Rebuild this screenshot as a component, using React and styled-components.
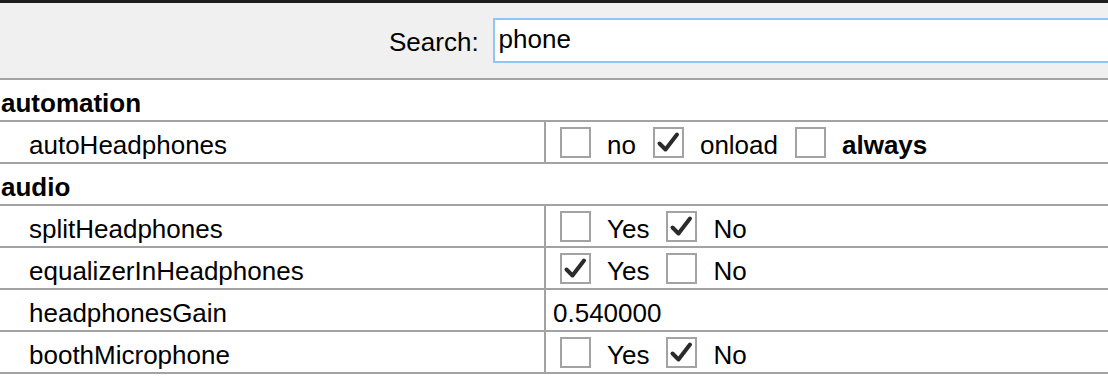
import React from "react";
import styled, { createGlobalStyle } from "styled-components";

const GlobalStyle = createGlobalStyle`
  html, body {
    margin: 0;
    padding: 0;
    background: #ffffff;
    overflow: hidden;
  }
  body {
    font-family: "Liberation Sans", Arial, sans-serif;
    font-size: 26px;
    color: #000000;
  }
`;

const Page = styled.div`
  width: 1108px;
  height: 386px;
  overflow: hidden;
  border-top: 3px solid #1e1e1e;
  box-sizing: border-box;
`;

const SearchBar = styled.div`
  display: flex;
  align-items: center;
  gap: 14px;
  height: 75px;
  padding-left: 389px;
  background: #f0f0f0;
  border-bottom: 2px solid #a3a3a3;
  overflow: hidden;
`;

const SearchLabel = styled.label`
  font-size: 26px;
  flex: none;
  margin-top: 4px;
`;

const SearchInput = styled.input`
  flex: none;
  width: 660px;
  height: 45px;
  box-sizing: border-box;
  border: 2px solid #91c6f4;
  outline: none;
  padding: 0 4px 2px;
  font-family: "Liberation Sans", Arial, sans-serif;
  font-size: 26px;
  color: #000000;
  background: #ffffff;
`;

const Table = styled.div`
  display: flex;
  flex-direction: column;
`;

const GroupHeader = styled.div`
  height: 40px;
  box-sizing: border-box;
  display: flex;
  align-items: center;
  padding: 6px 0 0 1px;
  font-weight: bold;
  border-bottom: 2px solid #a3a3a3;
  height: 42px;
`;

const Row = styled.div`
  height: 42px;
  box-sizing: border-box;
  display: grid;
  grid-template-columns: 546px 1fr;
  border-bottom: 2px solid #a3a3a3;
`;

const KeyCell = styled.div`
  display: flex;
  align-items: center;
  padding: 6px 0 0 29px;
  border-right: 2px solid #a3a3a3;
`;

const ValueCell = styled.div`
  display: flex;
  align-items: center;
  padding-left: ${(p) => (p.$text ? "7px" : "14px")};
  padding-top: ${(p) => (p.$text ? "6px" : "0")};
`;

const Option = styled.span`
  display: inline-flex;
  align-items: center;
  margin-right: 17px;
`;

const Box = styled.span`
  width: 31px;
  height: 31px;
  box-sizing: border-box;
  border: 2px solid #a3a3a3;
  background: #ffffff;
  display: inline-flex;
  align-items: center;
  justify-content: center;
  margin-right: 16px;
  flex: none;
`;

const OptionText = styled.span`
  font-weight: ${(p) => (p.$bold ? "bold" : "normal")};
  margin-top: 6px;
`;

const Check = () => (
  <svg width="25" height="25" viewBox="0 0 25 25">
    <path
      d="M3.5 13.5 L9.5 19.5 L21 4.5"
      fill="none"
      stroke="#2b2b2b"
      strokeWidth="4"
      strokeLinecap="round"
      strokeLinejoin="round"
    />
  </svg>
);

const Choices = ({ options, value, bold }) => (
  <ValueCell>
    {options.map((o) => (
      <Option key={o}>
        <Box>{o === value && <Check />}</Box>
        <OptionText $bold={bold === o}>{o}</OptionText>
      </Option>
    ))}
  </ValueCell>
);

const groups = [
  {
    name: "automation",
    rows: [
      { key: "autoHeadphones", options: ["no", "onload", "always"], value: "onload", bold: "always" },
    ],
  },
  {
    name: "audio",
    rows: [
      { key: "splitHeadphones", options: ["Yes", "No"], value: "No" },
      { key: "equalizerInHeadphones", options: ["Yes", "No"], value: "Yes" },
      { key: "headphonesGain", text: "0.540000" },
      { key: "boothMicrophone", options: ["Yes", "No"], value: "No" },
    ],
  },
];

export default function App() {
  return (
    <Page>
      <GlobalStyle />
      <SearchBar>
        <SearchLabel htmlFor="search">Search:</SearchLabel>
        <SearchInput id="search" defaultValue="phone" />
      </SearchBar>
      <Table>
        {groups.map((g) => (
          <React.Fragment key={g.name}>
            <GroupHeader>{g.name}</GroupHeader>
            {g.rows.map((r) => (
              <Row key={r.key}>
                <KeyCell>{r.key}</KeyCell>
                {r.text ? (
                  <ValueCell $text>{r.text}</ValueCell>
                ) : (
                  <Choices options={r.options} value={r.value} bold={r.bold} />
                )}
              </Row>
            ))}
          </React.Fragment>
        ))}
      </Table>
    </Page>
  );
}
